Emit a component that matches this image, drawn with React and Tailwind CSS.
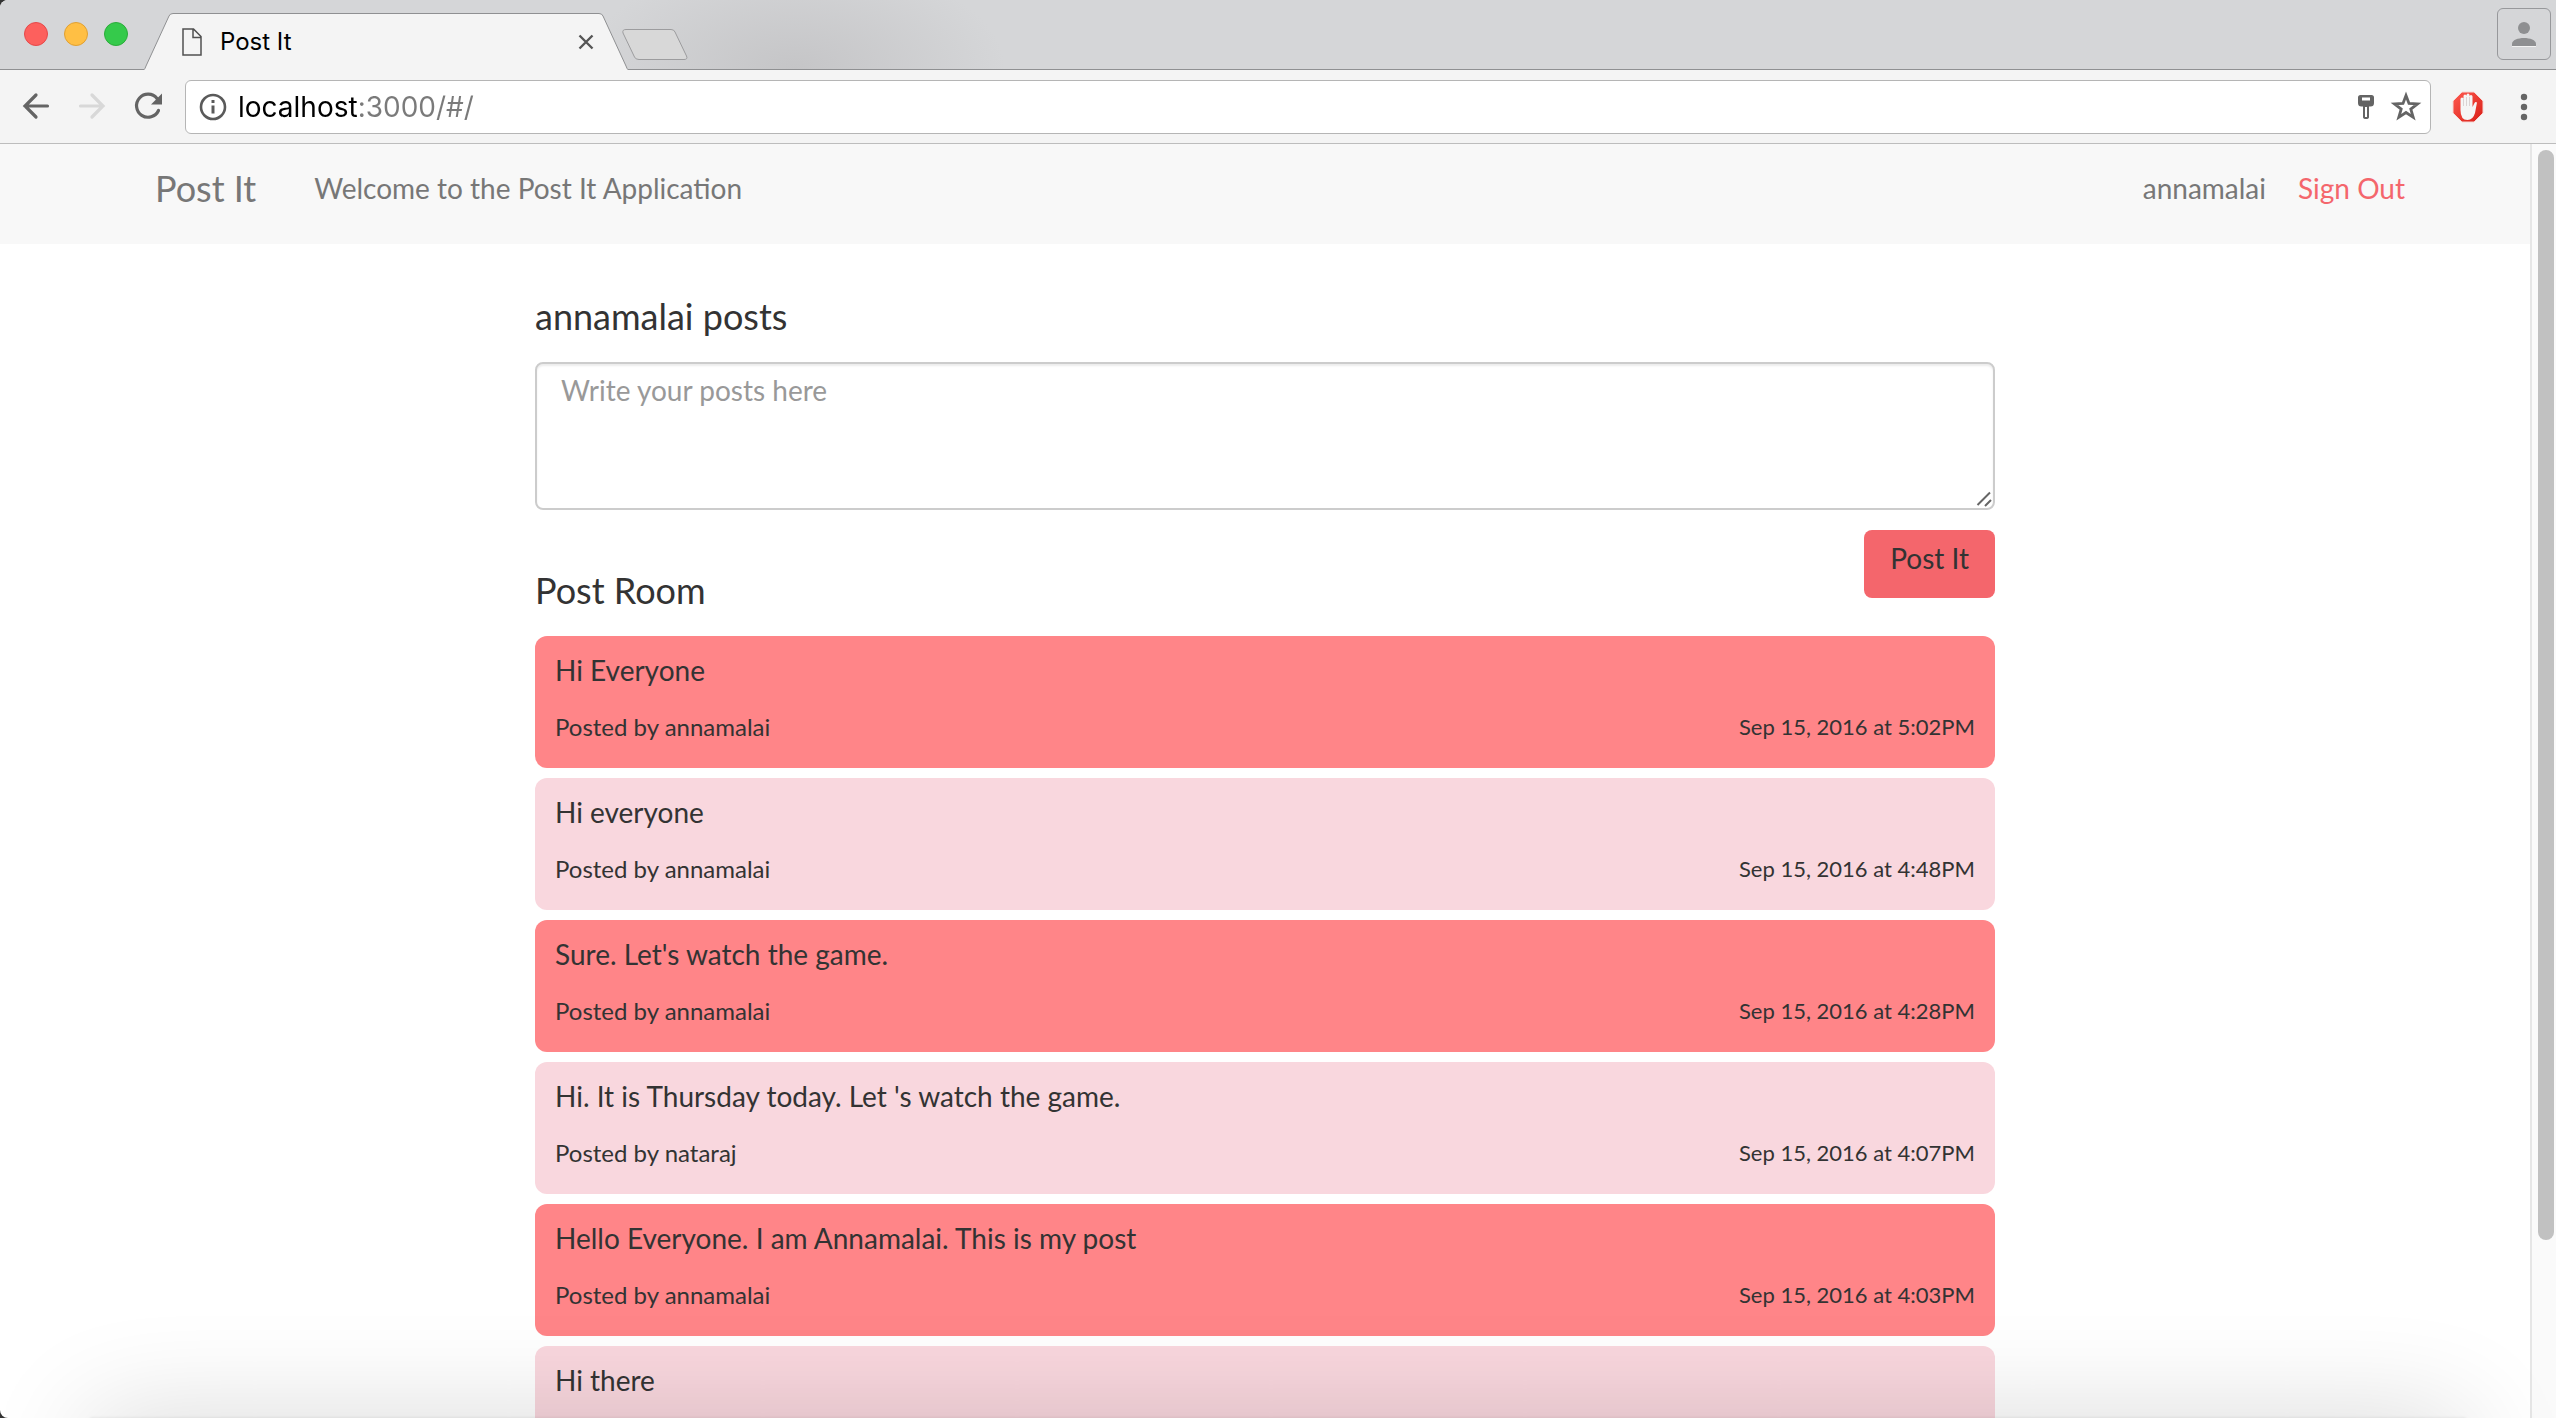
import React from "react";

const posts = [
  { text: "Hi Everyone", author: "annamalai", date: "Sep 15, 2016 at 5:02PM" },
  { text: "Hi everyone", author: "annamalai", date: "Sep 15, 2016 at 4:48PM" },
  { text: "Sure. Let's watch the game.", author: "annamalai", date: "Sep 15, 2016 at 4:28PM" },
  { text: "Hi. It is Thursday today. Let 's watch the game.", author: "nataraj", date: "Sep 15, 2016 at 4:07PM" },
  { text: "Hello Everyone. I am Annamalai. This is my post", author: "annamalai", date: "Sep 15, 2016 at 4:03PM" },
  { text: "Hi there" },
];

function TabStrip() {
  return (
    <div className="flex h-[70px] shrink-0 items-start border-b border-[#8f9092] bg-[#d5d6d8] bg-[radial-gradient(ellipse_210px_110px_at_795px_100%,#c5c5c7,transparent)]">
      <div className="flex gap-4 pt-[22px] pl-6">
        <button aria-label="Close window" className="size-6 rounded-full border border-[#e5494a] bg-[#fd605d]" />
        <button aria-label="Minimize window" className="size-6 rounded-full border border-[#e0a033] bg-[#ffbf44]" />
        <button aria-label="Zoom window" className="size-6 rounded-full border border-[#2bac3a] bg-[#35ca4b]" />
      </div>

      <div className="relative mt-[13px] ml-4 flex h-[57px] w-[484px] shrink-0 items-center pr-[34px] pl-[37px]">
        <svg className="absolute inset-0" width="484" height="57" viewBox="0 0 484 57" aria-hidden="true">
          <path d="M0 57 Q1 56 2 53 L25 3 Q26 .5 29 .5 H455 Q458 .5 459 3 L482 53 Q483 56 484 57Z" fill="#f4f4f4" />
          <path d="M0 56.5 Q1 56 2 53 L25 3 Q26 .5 29 .5 H455 Q458 .5 459 3 L482 53 Q483 56 484 56.5" fill="none" stroke="#8f9092" />
        </svg>
        <svg className="relative" width="22" height="28" viewBox="0 0 22 28" fill="none" stroke="#505050" strokeWidth="1.5" aria-hidden="true">
          <path d="M2 1h10.500l7.500 7.500V27H2Z M12 1v8.500h8" />
        </svg>
        <span className="relative ml-[17px] flex-1 font-['Inter',sans-serif] text-2xl leading-8 text-black">Post It</span>
        <button aria-label="Close tab" className="relative">
          <svg width="16" height="16" viewBox="0 0 16 16" stroke="#555" strokeWidth="2.400" aria-hidden="true">
            <path d="M1.500 1.500l13 13M14.500 1.500l-13 13" />
          </svg>
        </button>
      </div>

      <button aria-label="New tab" className="mt-[29px] -ml-[6px]">
        <svg width="66" height="32" viewBox="0 0 66 32" aria-hidden="true">
          <path d="M4 .5H49Q52 .5 53 3L64.500 27Q66 30.500 62 30.500H17Q13.500 30.500 12.500 28L1 4Q0 .5 4 .5Z" fill="#d8d8d8" stroke="#9c9c9e" />
        </svg>
      </button>

      <button aria-label="Profile" className="mt-2 mr-[5px] ml-auto flex h-[52px] w-[54px] items-center justify-center rounded-md border border-[#97989b]">
        <svg width="26" height="26" viewBox="0 0 26 26" fill="#8e8f91" aria-hidden="true">
          <circle cx="13" cy="7" r="6" />
          <path d="M1 25v-2c0-4 6-6 12-6s12 2 12 6v2z" />
          <path d="M1 25.500h24" stroke="#f2f2f2" />
        </svg>
      </button>
    </div>
  );
}

function Toolbar() {
  return (
    <div className="flex h-[74px] shrink-0 items-center border-b border-[#bdbdbd] bg-[#f4f4f4] pr-4 pl-5">
      <div className="flex gap-6">
        <button aria-label="Back">
          <svg width="32" height="32" viewBox="0 0 32 32" fill="none" stroke="#646464" strokeWidth="3.200" strokeLinecap="round" aria-hidden="true">
            <path d="M27.500 15H5M16 4L5 15l11 11" />
          </svg>
        </button>
        <button aria-label="Forward">
          <svg width="32" height="32" viewBox="0 0 32 32" fill="none" stroke="#d8d8d8" strokeWidth="3.200" strokeLinecap="round" aria-hidden="true">
            <path d="M4.500 15H27M16 4l11 11-11 11" />
          </svg>
        </button>
        <button aria-label="Reload">
          <svg width="32" height="32" viewBox="0 0 32 32" fill="none" stroke="#646464" strokeWidth="3.200" aria-hidden="true">
            <path d="M25 7.500A11.500 11.500 0 1 0 26.500 19.500" strokeLinecap="round" />
            <path d="M30 2.500v11H19z" fill="#646464" stroke="none" />
          </svg>
        </button>
      </div>

      <div className="ml-[21px] flex h-[54px] flex-1 items-center rounded-md border border-[#b5b5b5] bg-white pr-2 pl-[13px]">
        <svg width="28" height="28" viewBox="0 0 28 28" fill="none" stroke="#5a5a5a" strokeWidth="2.600" aria-hidden="true">
          <circle cx="14" cy="14" r="12" />
          <path d="M14 12.500v8M14 7v3" strokeWidth="3" />
        </svg>
        <input
          aria-label="Address"
          defaultValue="localhost:3000/#/"
          className="ml-[11px] h-10 min-w-0 flex-1 bg-[linear-gradient(to_right,#000_120px,#7a7a7a_120px)] bg-clip-text font-['Inter',sans-serif] text-[28px] leading-10 text-transparent outline-none"
        />
        <button aria-label="Saved passwords">
          <svg width="18" height="26" viewBox="0 0 18 26" aria-hidden="true">
            <path d="M3.500 1h11Q17 1 17 3.500V9q0 3.500-3.500 3.500H12V23q0 2-3 2t-3-2V12.500H4.500Q1 12.500 1 9V3.500Q1 1 3.500 1Z" fill="#646464" />
            <path d="M5 3.500h8v3H5zM8 13h2v10H8z" fill="#fff" />
          </svg>
        </button>
        <button aria-label="Bookmark" className="ml-[15px]">
          <svg width="32" height="32" viewBox="0 0 32 32" fill="none" stroke="#646464" strokeWidth="2.800" aria-hidden="true">
            <path d="M16 4.500l3 8 8.500.4-6.700 5.200 2.400 8.200-7.200-4.800-7.200 4.800 2.400-8.200-6.700-5.200 8.500-.4z" />
          </svg>
        </button>
      </div>

      <button aria-label="AdBlock" className="ml-[21px]">
        <svg width="32" height="32" viewBox="0 0 32 32" aria-hidden="true">
          <defs>
            <linearGradient id="stop" x1="0" x2="1" y1="0" y2="1">
              <stop offset="0" stopColor="#ff5a50" />
              <stop offset="1" stopColor="#d81e16" />
            </linearGradient>
          </defs>
          <path d="M10 1h12l9 9v12l-9 9H10l-9-9V10z" fill="url(#stop)" stroke="#f6d6d4" />
          <path d="M8.500 19V8a1.500 1.500 0 0 1 3 0V5a1.500 1.500 0 0 1 3 0V4a1.500 1.500 0 0 1 3 0V5.500a1.500 1.500 0 0 1 3 0V16l2-4q1-1.500 2.500-.5L23 22q-2 7-7.500 7-7 0-7-10Z" fill="#f5f5f5" />
          <path d="M11.500 8v7M14.500 6v9M17.500 6v9" stroke="#d0c4c4" strokeWidth=".7" />
        </svg>
      </button>
      <button aria-label="Menu" className="ml-6">
        <svg width="32" height="32" viewBox="0 0 32 32" fill="#646464" aria-hidden="true">
          <circle cx="16" cy="6" r="3.200" />
          <circle cx="16" cy="16" r="3.200" />
          <circle cx="16" cy="26" r="3.200" />
        </svg>
      </button>
    </div>
  );
}

function Navbar() {
  return (
    <nav className="h-[100px] bg-[#f8f8f8] pt-6">
      <div className="mx-auto flex max-w-[2340px] items-start pr-[30px] pl-[60px] text-[28px] leading-10 text-[#777]">
        <a href="#/" className="text-4xl leading-10">Post It</a>
        <p className="ml-[58px]">Welcome to the Post It Application</p>
        <span className="ml-auto">annamalai</span>
        <a href="#/signout" className="ml-8 text-[#f4666c]">Sign Out</a>
      </div>
    </nav>
  );
}

function Post({ post, striped }) {
  return (
    <li className={(striped ? "bg-[#ff8588]" : "bg-[#f9d7de]") + " min-h-[132px] rounded-xl px-5 pt-3 pb-6"}>
      <p className="text-[28px] leading-[44px]">{post.text}</p>
      {post.author && (
        <div className="mt-[18px] flex justify-between leading-[34px]">
          <span className="text-2xl leading-[34px]">Posted by {post.author}</span>
          <time className="text-[22px]">{post.date}</time>
        </div>
      )}
    </li>
  );
}

export default function App() {
  return (
    <div className="h-screen bg-[#333]">
      <div className="relative flex h-full flex-col overflow-hidden rounded-l-lg bg-white font-['Papyrus','Lato',sans-serif] text-[#333]">
        <TabStrip />
        <Toolbar />
        <div className="flex min-h-0 flex-1">
          <div className="min-w-0 flex-1 overflow-hidden">
            <Navbar />
            <main className="mx-auto max-w-[1460px] pt-[52px]">
              <form onSubmit={(e) => e.preventDefault()}>
                <h2 className="text-4xl leading-10">
                  <label htmlFor="post">annamalai posts</label>
                </h2>
                <div className="relative mt-[26px]">
                  <textarea
                    id="post"
                    placeholder="Write your posts here"
                    className="block h-[148px] w-full resize-none rounded-lg border-2 border-[#ccc] bg-white px-6 pt-1.5 text-[28px] leading-10 shadow-[inset_0_2px_2px_rgba(0,0,0,0.075)] outline-none placeholder:text-[#999]"
                  />
                  <svg className="absolute right-[3px] bottom-[3px]" width="16" height="16" viewBox="0 0 16 16" stroke="#666" strokeWidth="2" aria-hidden="true">
                    <path d="M1.500 14L14 1.500M9 15l6-6" />
                  </svg>
                </div>
                <div className="mt-5 flex items-start justify-between">
                  <h2 className="mt-10 text-4xl leading-10">Post Room</h2>
                  <button type="submit" className="rounded-lg bg-[#f4666c] px-[26px] pt-2 pb-5 text-[28px] leading-10">
                    Post It
                  </button>
                </div>
              </form>
              <ul className="mt-[26px] flex flex-col gap-2.5">
                {posts.map((post, i) => (
                  <Post key={i} post={post} striped={i % 2 === 0} />
                ))}
              </ul>
            </main>
          </div>
          <div className="w-[26px] shrink-0 border-l-2 border-[#e6e6e6] bg-[#fafafa] pt-1.5 pl-1.5">
            <div className="h-[86%] w-4 rounded-full bg-[#c1c1c1]" />
          </div>
        </div>
        {/* shade cast upward from beneath the window's lower edge */}
        <div className="pointer-events-none absolute inset-x-[90px] top-full h-24 shadow-[0_0_110px_rgba(0,0,0,0.16),0_0_3px_rgba(0,0,0,0.1)]" />
      </div>
    </div>
  );
}
